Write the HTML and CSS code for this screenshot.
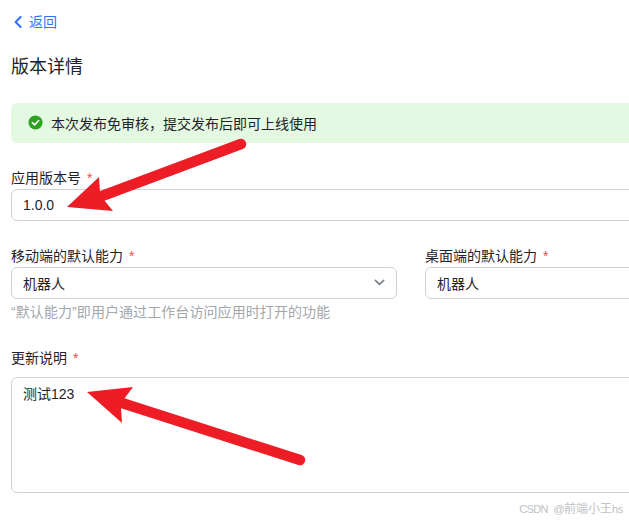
FILE: index.html
```html
<!DOCTYPE html>
<html lang="zh-CN">
<head>
<meta charset="utf-8">
<title>版本详情</title>
<link rel="stylesheet" href="styles.css">
</head>
<body>
<main class="page">
  <a class="back" href="#">
    <svg class="back-icon" viewBox="0 0 8 12" width="8" height="12"><path d="M6.6 1 1.6 6l5 5" fill="none" stroke="#3370ff" stroke-width="2" stroke-linecap="round" stroke-linejoin="round"/></svg>
    <span>返回</span>
  </a>
  <h1 class="title">版本详情</h1>
  <div class="alert">
    <svg class="alert-icon" viewBox="0 0 16 16" width="15" height="15"><circle cx="8" cy="8" r="7.5" fill="#2ea121"/><path d="M4.6 8.2 7 10.5l4.4-4.6" fill="none" stroke="#fff" stroke-width="1.7" stroke-linecap="round" stroke-linejoin="round"/></svg>
    <span>本次发布免审核，提交发布后即可上线使用</span>
  </div>
  <section class="field version">
    <label class="label">应用版本号<i class="req">*</i></label>
    <div class="control">1.0.0</div>
  </section>
  <section class="row">
    <div class="field">
      <label class="label">移动端的默认能力<i class="req">*</i></label>
      <div class="control select">
        <span>机器人</span>
        <svg class="chevron" viewBox="0 0 12 8" width="11" height="7"><path d="M1.2 1.5 6 6.2l4.8-4.7" fill="none" stroke="#7a8087" stroke-width="1.8" stroke-linecap="round" stroke-linejoin="round"/></svg>
      </div>
    </div>
    <div class="field">
      <label class="label">桌面端的默认能力<i class="req">*</i></label>
      <div class="control cjk">机器人</div>
    </div>
  </section>
  <p class="hint">“默认能力”即用户通过工作台访问应用时打开的功能</p>
  <section class="field notes">
    <label class="label">更新说明<i class="req">*</i></label>
    <div class="control area">测试123</div>
  </section>
</main>
<svg class="arrows" viewBox="0 0 629 520" width="629" height="520">
  <g fill="#ee1c25">
    <path d="M67 207 99 177 100 192 104 200 113 211Z"/>
    <path d="M87 392 133 387 124 399 121 408 122 423Z"/>
  </g>
  <g stroke="#ee1c25" stroke-width="10.5" stroke-linecap="round">
    <path d="M241 144 102 196"/>
    <path d="M300 460 122 403"/>
  </g>
</svg>
<div class="mark"><span class="mark-latin">CSDN @</span>前端小王<span class="mark-end">hs</span></div>
</body>
</html>
```
FILE: styles.css
```css
* { box-sizing: border-box; }
html, body { margin: 0; height: 100%; overflow: hidden; background: #fff; }
body {
  position: relative;
  font-family: "Liberation Sans", "Noto Sans CJK SC", sans-serif;
  font-size: 14px;
  color: #1f2329;
}
.page { width: 900px; padding: 13px 0 0 11px; }
.back {
  display: flex;
  align-items: center;
  gap: 7px;
  height: 18px;
  padding-left: 3px;
  color: #3370ff;
  text-decoration: none;
  line-height: 18px;
}
.title {
  margin: 24px 0 0;
  font-size: 18px;
  font-weight: 400;
  line-height: 24px;
}
.alert {
  display: flex;
  align-items: center;
  gap: 8px;
  height: 40px;
  margin-top: 24px;
  padding: 0 0 1px 17px;
  background: #e4f9e1;
  border-radius: 6px;
}
.version { margin-top: 25px; }
.field { display: flex; flex-direction: column; }
.label { height: 21px; line-height: 20px; }
.req { margin-left: 6px; font-style: normal; color: #f54a45; }
.control {
  display: flex;
  align-items: center;
  height: 32px;
  padding: 0 11px;
  border: 1px solid #d0d3d6;
  border-radius: 6px;
  background: #fff;
}
.select { justify-content: space-between; padding-bottom: 1px; }
.cjk { padding-bottom: 1px; }
.row {
  display: grid;
  grid-template-columns: 386px 1fr;
  column-gap: 28px;
  margin-top: 25px;
}
.hint {
  margin: 3px 0 0;
  line-height: 20px;
  letter-spacing: 0.08px;
  color: #a2a7ae;
}
.notes { margin-top: 24px; }
.notes .label { height: 31px; line-height: 24px; }
.area {
  align-items: flex-start;
  height: 116px;
  padding-top: 6px;
  line-height: 20px;
}
.arrows { position: absolute; left: 0; top: 0; pointer-events: none; }
.mark {
  position: absolute;
  right: 6px;
  top: 501px;
  font-size: 12px;
  line-height: 16px;
  color: #c0c2c4;
}
.mark-latin { font-size: 11px; letter-spacing: -0.6px; word-spacing: 3px; }
.mark-end { font-size: 11px; letter-spacing: -0.3px; }
```
